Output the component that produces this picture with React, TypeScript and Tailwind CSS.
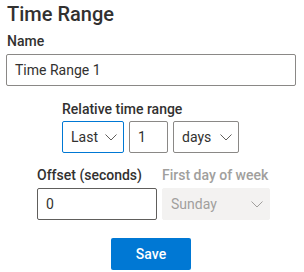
const Chevron = ({ muted }: { muted?: boolean }) => (
  <svg
    width="12"
    height="12"
    viewBox="0 0 12 12"
    className={muted ? "text-[#a19f9d]" : "text-[#605e5c]"}
  >
    <path d="M0.5 3.5 L6 9 L11.5 3.5" fill="none" stroke="currentColor" strokeWidth="1" />
  </svg>
);

const Select = ({
  value,
  width,
  focused,
  disabled,
}: {
  value: string;
  width: string;
  focused?: boolean;
  disabled?: boolean;
}) => (
  <div
    className={`flex h-8 items-center justify-between rounded-[2px] pl-2 pr-[6px] text-sm ${width} ${
      disabled
        ? "bg-[#f3f2f1] text-[#a19f9d] border border-[#f3f2f1]"
        : focused
        ? "border border-[#0078d4] text-[#323130] bg-white"
        : "border border-[#8a8886] text-[#323130] bg-white"
    }`}
  >
    <span>{value}</span>
    <Chevron muted={disabled} />
  </div>
);

const App = () => {
  return (
    <div className="w-[304px] h-[272px] bg-white pl-[6px] pr-[8px] font-['Roboto',sans-serif] text-[#323130]">
      <h1 className="pl-[1px] text-[20px] font-medium leading-7">Time Range</h1>

      <label className="mt-[3px] block pl-[1px] text-sm font-medium leading-5">Name</label>
      <div className="mt-[3px] flex h-8 items-center rounded-[2px] border border-[#8a8886] px-2 text-sm">
        Time Range 1
      </div>

      <div className="mt-[13px] flex justify-center">
        <div className="mr-[1px]">
          <div className="whitespace-nowrap text-sm font-medium leading-5">Relative time range</div>
          <div className="mt-[2px] flex gap-[5px]">
            <Select value="Last" width="w-[62px]" focused />
            <div className="flex h-8 w-[39px] items-center rounded-[2px] border border-[#8a8886] px-2 text-sm">
              1
            </div>
            <Select value="days" width="w-[66px]" />
          </div>
        </div>
      </div>

      <div className="mt-[12px] flex justify-center">
        <div className="ml-[5px] flex gap-[5px]">
          <div className="w-[120px]">
            <div className="whitespace-nowrap text-sm font-medium leading-5">Offset (seconds)</div>
            <div className="mt-[3px] flex h-8 w-[120px] items-center rounded-[2px] border border-[#605e5c] px-2 text-sm">
              0
            </div>
          </div>
          <div className="w-[108px]">
            <div className="whitespace-nowrap text-sm font-medium leading-5 text-[#a19f9d]">
              First day of week
            </div>
            <div className="mt-[3px]">
              <Select value="Sunday" width="w-[108px]" disabled />
            </div>
          </div>
        </div>
      </div>

      <div className="mt-[18px] flex justify-center">
        <button className="h-8 w-20 rounded-[2px] bg-[#0078d4] text-sm font-medium text-white">
          Save
        </button>
      </div>
    </div>
  );
};

export default App;
